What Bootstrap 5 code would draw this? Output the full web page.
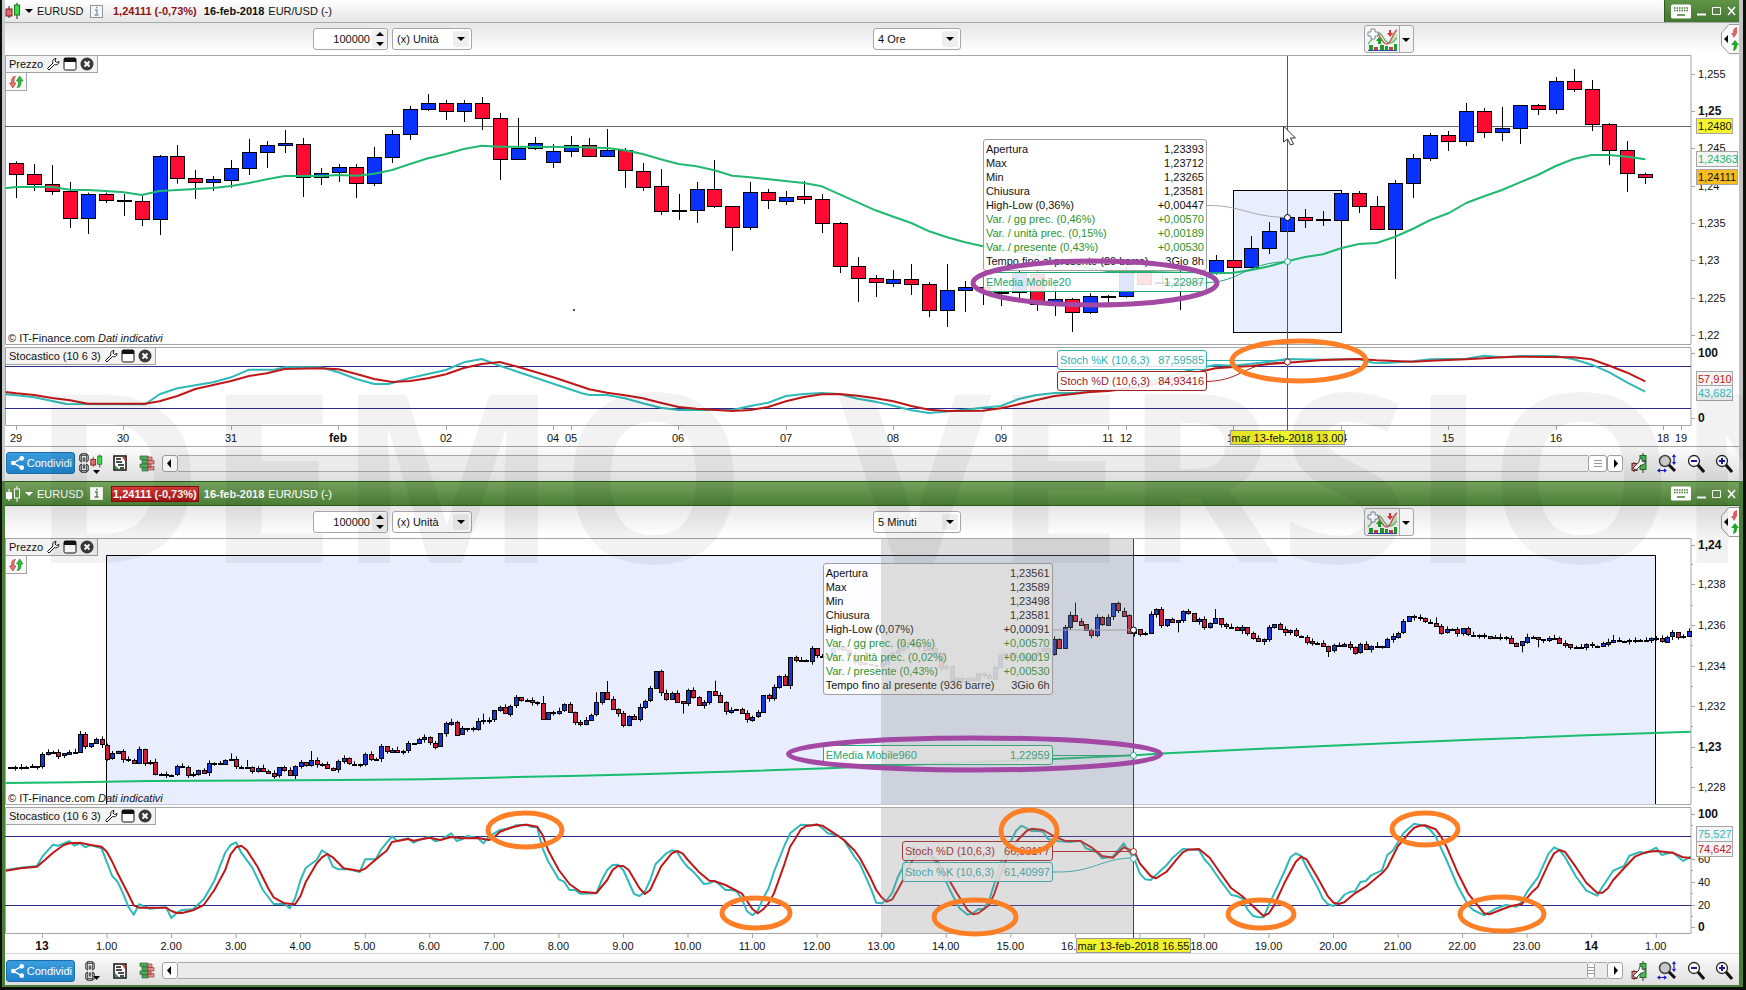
<!DOCTYPE html>
<html lang="it">
<head>
<meta charset="utf-8">
<meta name="viewport" content="width=device-width, initial-scale=1">
<title>EURUSD</title>
<link rel="stylesheet" href="https://cdn.jsdelivr.net/npm/bootstrap@5.3.0/dist/css/bootstrap.min.css">
<style>
body{background:#0b0f0a;font-family:"Liberation Sans",Arial,sans-serif;font-size:11px;line-height:14px;color:#111;padding:0 3px 3px 2px;position:relative;min-width:1200px}
.trade-win{background:#fff;border-left:3px solid #c9ccd0;border-right:4px solid #c4c4c4}
.trade-win.active{border-color:#4a7d38;border-bottom:2px solid #4f7f3c}
.win-title{height:23px;background:linear-gradient(#fff,#e6e6e6);border-bottom:1px solid #a9a9a9}
.active .win-title{height:25px;background:linear-gradient(#74a25c,#4b7e37);border-top:1px solid #2c5a1c;border-bottom:1px solid #2c5a1c;color:#fff}
.win-title .sym{width:53px}
.quote{color:#8e1418;font-weight:bold;padding:1px 2px;margin-left:8px;margin-right:5px}
.active .quote{color:#fff;background:linear-gradient(#d23a3a,#a81414);border:1px solid #7c1010;padding:0 1px}
.win-ctl{background:linear-gradient(#5f9446,#447730);border-left:1px solid #2f5c1f;padding-left:6px;width:75px;gap:6px;color:#fff}
.active .win-ctl{background:none;border-color:transparent}
.plain-btn{border:0;background:none;padding:0;color:inherit;line-height:0}
.win-tools{height:32px;background:linear-gradient(#e6e6e6,#fff 90%);display:grid;grid-template-columns:308px 32.3% 28.3% 1fr auto;align-items:center}
.ctl{height:22px;border:1px solid #a6a6a6;border-radius:3px;background-color:#fff;color:#111;font-size:11px}
.ctl input{border:0;background:none;width:58px;text-align:right;padding:0 2px 0 0;outline:0;color:inherit}
.spin{background:#f0f0f0;border-radius:2px}
select.ctl{appearance:none;padding:0 20px 0 4px;background-image:url("data:image/svg+xml,%3Csvg xmlns='http://www.w3.org/2000/svg' width='16' height='16'%3E%3Crect width='16' height='16' rx='2' fill='%23eeeeee'/%3E%3Cpath d='M4 6h8l-4 4z' fill='%23000'/%3E%3C/svg%3E");background-repeat:no-repeat;background-position:right 2px center}
.w-unit{width:80px}.w-time{width:88px}
.ind-btn{border:1px solid #a6a6a6;border-radius:3px;background:#f4f4f4;height:28px;width:50px}
.side-tab{width:18px;height:30px}
.chart-box{position:relative}
.chart-box svg.layer{position:absolute;inset:0;width:100%;height:100%;display:block}
.h-top{height:392px}.h-low{height:416px}
.tips{position:absolute;inset:0 48px 0 0}
.tag-chip{position:absolute;left:0;height:18px;border:1px solid #a3a3a3;background:#f3f3f3;padding:0 3px;display:flex;align-items:center;gap:3px;white-space:nowrap}
.chip-mini{top:17px;height:19px;background:#fafafa;padding:0 2px}
.top-stoch{top:292px}.low-stoch{top:269px}
.tip{position:absolute;border:1px solid #a0a0a0;border-radius:3px;background:rgba(255,255,255,.88);padding:2px}
.tip table{width:100%}
.tip td{padding:0;line-height:14px;white-space:nowrap}
.tip td:last-child{text-align:right}
.tip .up{color:#2c932c}
.t-ema{border-color:#22a870;color:#22a870}
.t-k{border-color:#2fb0b0;color:#2fb0b0}
.t-d{border-color:#a32020;color:#a32020}
.tip-a{left:58%;width:224px;top:84px}
.tip-b{left:58%;width:224px;top:217px}
.tip-c{left:62.4%;width:150px;top:295px}
.tip-d{left:62.4%;width:150px;top:316px}
.tip-e{left:48.5%;width:230px;top:25px}
.tip-f{left:48.5%;width:230px;top:207px}
.tip-g{left:53.2%;width:151px;top:303px}
.tip-h{left:53.2%;width:151px;top:324px}
.win-foot{height:34px;background:linear-gradient(#fdfdfd,#dedede);padding:0 6px 2px 0}
.active .win-foot{height:31px;padding:2px 6px 0 0}
.share-btn{background:linear-gradient(#3a9ddf,#1f82c8);border:1px solid #1b6ca8;border-radius:3px;color:#fff;height:22px;width:69px;padding:0 2px 0 3px;font-size:11px;margin-left:1px}
.bars-ico{margin:0 7px 0 12px}
.track{height:17px;border-top:1px solid #a9a9a9;border-bottom:1px solid #a9a9a9;background:#ebebeb}
.track-btn{height:17px;width:16px;border:1px solid #a0a0a0;border-radius:3px;background:#fff;padding:0;line-height:0}
.thumb{width:19px;color:#999}.thumb-s{width:8px;color:#999}
.foot-tools{gap:10px}
.water{position:absolute;left:0;top:370px;width:100%;height:220px;overflow:hidden;pointer-events:none;z-index:9}
.water text{font:bold 236px "Open Sans",sans-serif;fill:#000;fill-opacity:.05}
</style>
</head>
<body>
<svg class="d-none" aria-hidden="true">
<symbol id="i-candles" viewBox="0 0 16 18"><path d="M4 4v12M12 1v16" stroke="#222"/><rect x="1" y="7" width="6" height="7" fill="#e06a6a" stroke="#7c1d1d"/><rect x="9.500" y="3" width="5" height="10" fill="#3fdc4c" stroke="#137a1c"/></symbol>
<symbol id="i-candlesw" viewBox="0 0 16 18"><path d="M4 4v12M12 1v16" stroke="#fff"/><rect x="1" y="7" width="6" height="7" fill="#fff"/><rect x="9.500" y="4" width="5" height="9" fill="#5c9046" stroke="#fff"/></symbol>
<symbol id="i-wrench" viewBox="0 0 14 14"><path d="M1.500 11.500 7 6C6 3.500 7.500 1.500 10 1.500L9 4l1.500 1.500L13 4.500C13 7 11 8.500 8.500 7.500L3 13z" fill="#fff" stroke="#111" stroke-linejoin="round"/></symbol>
<symbol id="i-pane" viewBox="0 0 14 14"><rect x="1" y="1" width="12" height="12" rx="1.500" fill="#fff" stroke="#111"/><path d="M1 1h12v4H1z" fill="#111"/></symbol>
<symbol id="i-close" viewBox="0 0 14 14"><circle cx="7" cy="7" r="6.500" fill="#3a3a3a"/><path d="m4.500 4.500 5 5m0-5-5 5" stroke="#fff" stroke-width="2"/></symbol>
<symbol id="i-swap" viewBox="0 0 16 14"><path d="M7.500 1.500C3.500 1.500 3.500 5 3.500 8H1.500l3.300 5L8 8H6c0-3 0-5 1.500-6.500z" fill="#e57373" stroke="#b83a3a" stroke-width=".7"/><path d="M9 12.500c4 0 4-3.500 4-6.500h2l-3.300-5L8.500 6h2c0 3 0 5-1.500 6.500z" fill="#2fbd3b" stroke="#128a1e" stroke-width=".7"/></symbol>
<symbol id="i-keys" viewBox="0 0 20 14"><rect width="20" height="14" rx="1.500" fill="#fff"/><path d="M3 3.500h14M3 6h14" stroke="#477a33" stroke-width="1.500" stroke-dasharray="1.500 1"/><path d="M6 10.500h8" stroke="#477a33" stroke-width="1.500"/></symbol>
<symbol id="i-ind" viewBox="0 0 32 24"><path d="M2 17C7 12 9 5 13 6s5 9 10 10 5-3 8-5L31 5c-4 2-6 11-9 11S16 5 12 5z" fill="#bfe6bd"/><path d="M2 17C7 12 9 5 13 6s5 9 10 10 5-3 8-5" fill="none" stroke="#5fb86a" stroke-width="1.300"/><path d="M10 7c3-3 6 11 11 10s5-11 10-14" fill="none" stroke="#c95a5a" stroke-width="1.500"/><path d="M5 2h4v3h3v4H9v3H5V9H2V5h3z" fill="#fff" stroke="#7a8a9a"/><path d="m13 10-3 4h2v3h3v-3h2z" fill="#1f9e2c"/><path d="m24 10 3-4h-2V3h-2v3h-2z" fill="#d33"/><path d="M3 18h4v5H3zM14 18h4v5h-4zM19 19h3v4h-3zM28 17h3v6h-3z" fill="#1f9e2c"/><path d="M8 20h4v3H8zM23 20h4v3h-4z" fill="#c33a55"/><path d="M2 23.500h29" stroke="#2b50a0"/></symbol>
<symbol id="i-share" viewBox="0 0 16 16"><path d="M12.500 3 3.500 8l9 5" fill="none" stroke="#fff" stroke-width="1.500"/><circle cx="12.500" cy="3" r="2.500" fill="#fff"/><circle cx="3.500" cy="8" r="2.500" fill="#fff"/><circle cx="12.500" cy="13" r="2.500" fill="#fff"/></symbol>
<symbol id="i-chain" viewBox="0 0 10 20"><path d="M3 8H2.500L1.500 7V3L3 1.500h4L8.500 3v4l-1 1H7M5 4.500v4M5 11.500v4M3 12H2.500l-1 1v4L3 18.500h4L8.500 17v-4l-1-1H7" fill="none" stroke="#222" stroke-width="2.400"/><path d="M3 8H2.500L1.500 7V3L3 1.500h4L8.500 3v4l-1 1H7M5 4.500v4M5 11.500v4M3 12H2.500l-1 1v4L3 18.500h4L8.500 17v-4l-1-1H7" fill="none" stroke="#ddd" stroke-width=".7"/></symbol>
<symbol id="i-doc" viewBox="0 0 14 16"><rect x="1" y="1" width="12" height="14" fill="#fff" stroke="#111" stroke-width="1.500"/><path d="M3 4h5M3 7h6M5 10h6M7 13h4" stroke="#111" stroke-width="1.500"/><path d="M9 2h3v4z" fill="#d44"/><path d="M2 14v-4l4 4z" fill="#2a9a34"/></symbol>
<symbol id="i-bars" viewBox="0 0 16 16"><path d="M1 .5h8v3.500H1zM3 4.500h6V8H3zM1 8.500h8V12H1zM3 12.500h6v3H3z" fill="#51a85c" stroke="#256b2e" stroke-width=".7"/><path d="M9 1.500h4v3.500H9zM9 5h6v3.500H9zM9 8.500h3V12H9zM9 11h6v3.500H9z" fill="#e58a8a" stroke="#994040" stroke-width=".7"/></symbol>
<symbol id="i-tool" viewBox="0 0 16 20"><path d="M12 0v20M3 9v10" stroke="#333"/><rect x="9" y="2.500" width="6" height="14" fill="#4cb955" stroke="#1f6e28"/><rect x="1" y="10.500" width="5" height="7" fill="#d98787" stroke="#7a2b2b"/><path d="m2 15 6-6c0-2 1-4 3-4v3l2 1 1-2c1 3-1 5-4 5l-5 5z" fill="#fff" stroke="#222" stroke-width=".8"/></symbol>
<symbol id="i-fit" viewBox="0 0 20 19"><circle cx="8" cy="7" r="5.500" fill="#c9c9c9" stroke="#444" stroke-width="1.500"/><path d="m12 11 6 6" stroke="#111" stroke-width="3"/><path d="M17 1v9M15.500 3 17 1l1.500 2M15.500 8l1.500 2 1.500-2M1 16.500h8M3 15l-2 1.500L3 18M7 15l2 1.500L7 18" stroke="#1a1ad0" fill="none" stroke-width="1.200"/></symbol>
<symbol id="i-minus" viewBox="0 0 18 19"><circle cx="7" cy="7" r="5.500" fill="#fff" stroke="#222" stroke-width="1.300"/><path d="M4 7h6" stroke="#1a1aa0" stroke-width="2"/><path d="m11 11 6 7" stroke="#111" stroke-width="3"/></symbol>
<symbol id="i-plus" viewBox="0 0 18 19"><circle cx="7" cy="7" r="5.500" fill="#fff" stroke="#222" stroke-width="1.300"/><path d="M4 7h6M7 4v6" stroke="#1a1aa0" stroke-width="2"/><path d="m11 11 6 7" stroke="#111" stroke-width="3"/></symbol>
</svg>

<section class="trade-win">
  <header class="win-title d-flex align-items-stretch">
    <div class="d-flex align-items-center flex-grow-1">
      <svg width="16" height="18"><use href="#i-candles"/></svg>
      <svg class="ms-1 me-1" width="8" height="6"><path d="M0 1h8L4 5z"/></svg>
      <span class="sym">EURUSD</span>
      <svg width="13" height="13"><rect x=".5" y=".5" width="12" height="12" fill="#f4f6f8" stroke="#8a949c"/><path d="M5 5h2v5M4.500 10h4M6 2.500h1.500" stroke="#8a949c" stroke-width="1.300" fill="none"/></svg>
      <span class="quote">1,24111 (-0,73%)</span><b class="me-1">16-feb-2018</b><span>EUR/USD (-)</span>
    </div>
    <div class="win-ctl d-flex align-items-center">
      <button class="plain-btn" aria-label="Tastiera"><svg width="20" height="15"><use href="#i-keys"/></svg></button>
      <button class="plain-btn" aria-label="Riduci"><svg width="9" height="10"><path d="M0 8.500h9" stroke="#fff" stroke-width="2"/></svg></button>
      <button class="plain-btn" aria-label="Ingrandisci"><svg width="9" height="10"><path d="M.5 1.500h8v7h-8z" fill="none" stroke="#fff"/></svg></button>
      <button class="plain-btn" aria-label="Chiudi"><svg width="9" height="10"><path d="m1 1 7 8m0-8L1 9" stroke="#fff" stroke-width="1.500"/></svg></button>
    </div>
  </header>
  <div class="win-tools">
    <span></span>
    <div class="d-flex">
      <div class="ctl d-flex align-items-center"><input type="text" aria-label="Quantità" value="100000"><svg class="spin" width="15" height="18"><path d="M4 6h8L8 2zM4 12h8l-4 4z"/></svg></div>
      <select class="ctl w-unit ms-1" aria-label="Unità"><option>(x) Unità</option></select>
    </div>
    <div><select class="ctl w-time" aria-label="Intervallo"><option>4 Ore</option></select></div>
    <div><button class="ind-btn d-flex align-items-center p-0" aria-label="Indicatori"><svg width="34" height="24"><use href="#i-ind"/></svg><svg width="14" height="26"><path d="M.5 0v26" stroke="#a6a6a6"/><path d="M3 12h8l-4 4z"/></svg></button></div>
    <button class="plain-btn side-tab" aria-label="Pannello ordini"><svg width="18" height="30"><path d="M18 .5H8L.5 9v12L8 29.500h10" fill="#fafafa" stroke="#999"/><path d="M7 11v8l-4-4z"/><path d="M16 3c-4 1-4 4-4 6h-2l3 5 3-5" fill="#e06060"/><path d="M12 27c4-1 4-4 4-6h2l-4-5-4 5h3" fill="#1faa2c"/></svg></button>
  </div>
  <div class="chart-box h-top" id="top">
    <svg class="layer base"></svg>
    <div class="tips">
      <div class="tip tip-a"><table><tbody>
        <tr><td>Apertura</td><td>1,23393</td></tr><tr><td>Max</td><td>1,23712</td></tr><tr><td>Min</td><td>1,23265</td></tr><tr><td>Chiusura</td><td>1,23581</td></tr><tr><td>High-Low (0,36%)</td><td>+0,00447</td></tr>
        <tr class="up"><td>Var. / gg prec. (0,46%)</td><td>+0,00570</td></tr><tr class="up"><td>Var. / unità prec. (0,15%)</td><td>+0,00189</td></tr><tr class="up"><td>Var. / presente (0,43%)</td><td>+0,00530</td></tr><tr><td>Tempo fino al presente (20 barre)</td><td>3Gio 8h</td></tr></tbody></table></div>
      <div class="tip tip-b t-ema d-flex justify-content-between"><span>EMedia Mobile20</span><span>1,22987</span></div>
      <div class="tip tip-c t-k d-flex justify-content-between"><span>Stoch %K (10,6,3)</span><span>87,59585</span></div>
      <div class="tip tip-d t-d d-flex justify-content-between"><span>Stoch %D (10,6,3)</span><span>84,93416</span></div>
    </div>
    <svg class="layer over"></svg>
    <div class="tag-chip">Prezzo <svg width="14" height="14"><use href="#i-wrench"/></svg><svg width="14" height="14"><use href="#i-pane"/></svg><svg width="14" height="14"><use href="#i-close"/></svg></div>
    <div class="tag-chip chip-mini"><svg width="16" height="14"><use href="#i-swap"/></svg></div>
    <div class="tag-chip top-stoch">Stocastico (10 6 3) <svg width="14" height="14"><use href="#i-wrench"/></svg><svg width="14" height="14"><use href="#i-pane"/></svg><svg width="14" height="14"><use href="#i-close"/></svg></div>
  </div>
  <footer class="win-foot d-flex align-items-center">
    <button class="share-btn d-flex align-items-center justify-content-between"><svg width="15" height="16"><use href="#i-share"/></svg>Condividi</button>
    <svg class="ms-1" width="34" height="22"><use href="#i-chain" x="0" y="1" width="10" height="20"/><use href="#i-candles" x="11" y="0" width="13" height="18"/><path d="M14 18h7l-3.500 4z"/></svg>
    <svg width="14" height="16"><use href="#i-doc"/></svg>
    <svg class="bars-ico" width="16" height="17"><use href="#i-bars"/></svg>
    <button class="track-btn" aria-label="Indietro"><svg width="8" height="9"><path d="M5 0v9L1 4.500z"/></svg></button>
    <div class="track flex-grow-1"></div>
    <button class="track-btn thumb" aria-label="Scorri"><svg width="8" height="9"><path d="M0 1.500h8M0 4.500h8M0 7.500h8" stroke="currentColor"/></svg></button>
    <button class="track-btn me-2" aria-label="Avanti"><svg width="8" height="9"><path d="M3 0v9l4-4.500z"/></svg></button>
    <div class="foot-tools d-flex align-items-center"><svg width="16" height="20"><use href="#i-tool"/></svg><svg width="20" height="19"><use href="#i-fit"/></svg><svg width="18" height="19"><use href="#i-minus"/></svg><svg width="18" height="19"><use href="#i-plus"/></svg></div>
  </footer>
</section>

<section class="trade-win active">
  <header class="win-title d-flex align-items-stretch">
    <div class="d-flex align-items-center flex-grow-1">
      <svg width="16" height="18"><use href="#i-candlesw"/></svg>
      <svg class="ms-1 me-1" width="8" height="6"><path d="M0 1h8L4 5z" fill="#fff"/></svg>
      <span class="sym">EURUSD</span>
      <svg width="13" height="13"><rect x=".5" y=".5" width="12" height="12" fill="#f4f6f8" stroke="#dfe8da"/><path d="M5 5h2v5M4.500 10h4M6 2.500h1.500" stroke="#56783f" stroke-width="1.300" fill="none"/></svg>
      <span class="quote">1,24111 (-0,73%)</span><b class="me-1">16-feb-2018</b><span>EUR/USD (-)</span>
    </div>
    <div class="win-ctl d-flex align-items-center">
      <button class="plain-btn" aria-label="Tastiera"><svg width="20" height="15"><use href="#i-keys"/></svg></button>
      <button class="plain-btn" aria-label="Riduci"><svg width="9" height="10"><path d="M0 8.500h9" stroke="#fff" stroke-width="2"/></svg></button>
      <button class="plain-btn" aria-label="Ingrandisci"><svg width="9" height="10"><path d="M.5 1.500h8v7h-8z" fill="none" stroke="#fff"/></svg></button>
      <button class="plain-btn" aria-label="Chiudi"><svg width="9" height="10"><path d="m1 1 7 8m0-8L1 9" stroke="#fff" stroke-width="1.500"/></svg></button>
    </div>
  </header>
  <div class="win-tools">
    <span></span>
    <div class="d-flex">
      <div class="ctl d-flex align-items-center"><input type="text" aria-label="Quantità" value="100000"><svg class="spin" width="15" height="18"><path d="M4 6h8L8 2zM4 12h8l-4 4z"/></svg></div>
      <select class="ctl w-unit ms-1" aria-label="Unità"><option>(x) Unità</option></select>
    </div>
    <div><select class="ctl w-time" aria-label="Intervallo"><option>5 Minuti</option></select></div>
    <div><button class="ind-btn d-flex align-items-center p-0" aria-label="Indicatori"><svg width="34" height="24"><use href="#i-ind"/></svg><svg width="14" height="26"><path d="M.5 0v26" stroke="#a6a6a6"/><path d="M3 12h8l-4 4z"/></svg></button></div>
    <button class="plain-btn side-tab" aria-label="Pannello ordini"><svg width="18" height="30"><path d="M18 .5H8L.5 9v12L8 29.500h10" fill="#fafafa" stroke="#999"/><path d="M7 11v8l-4-4z"/><path d="M16 3c-4 1-4 4-4 6h-2l3 5 3-5" fill="#e06060"/><path d="M12 27c4-1 4-4 4-6h2l-4-5-4 5h3" fill="#1faa2c"/></svg></button>
  </div>
  <div class="chart-box h-low" id="low">
    <svg class="layer base"></svg>
    <div class="tips">
      <div class="tip tip-e"><table><tbody>
        <tr><td>Apertura</td><td>1,23561</td></tr><tr><td>Max</td><td>1,23589</td></tr><tr><td>Min</td><td>1,23498</td></tr><tr><td>Chiusura</td><td>1,23581</td></tr><tr><td>High-Low (0,07%)</td><td>+0,00091</td></tr>
        <tr class="up"><td>Var. / gg prec. (0,46%)</td><td>+0,00570</td></tr><tr class="up"><td>Var. / unità prec. (0,02%)</td><td>+0,00019</td></tr><tr class="up"><td>Var. / presente (0,43%)</td><td>+0,00530</td></tr><tr><td>Tempo fino al presente (936 barre)</td><td>3Gio 6h</td></tr></tbody></table></div>
      <div class="tip tip-f t-ema d-flex justify-content-between"><span>EMedia Mobile960</span><span>1,22959</span></div>
      <div class="tip tip-g t-d d-flex justify-content-between"><span>Stoch %D (10,6,3)</span><span>66,83177</span></div>
      <div class="tip tip-h t-k d-flex justify-content-between"><span>Stoch %K (10,6,3)</span><span>61,40997</span></div>
    </div>
    <svg class="layer over"></svg>
    <div class="tag-chip">Prezzo <svg width="14" height="14"><use href="#i-wrench"/></svg><svg width="14" height="14"><use href="#i-pane"/></svg><svg width="14" height="14"><use href="#i-close"/></svg></div>
    <div class="tag-chip chip-mini"><svg width="16" height="14"><use href="#i-swap"/></svg></div>
    <div class="tag-chip low-stoch">Stocastico (10 6 3) <svg width="14" height="14"><use href="#i-wrench"/></svg><svg width="14" height="14"><use href="#i-pane"/></svg><svg width="14" height="14"><use href="#i-close"/></svg></div>
  </div>
  <footer class="win-foot d-flex align-items-center">
    <button class="share-btn d-flex align-items-center justify-content-between"><svg width="15" height="16"><use href="#i-share"/></svg>Condividi</button>
    <svg class="ms-1" width="34" height="22"><use href="#i-chain" x="6" y="1" width="10" height="20"/><path d="M14 16h7l-3.500 4z"/></svg>
    <svg width="14" height="16"><use href="#i-doc"/></svg>
    <svg class="bars-ico" width="16" height="17"><use href="#i-bars"/></svg>
    <button class="track-btn" aria-label="Indietro"><svg width="8" height="9"><path d="M5 0v9L1 4.500z"/></svg></button>
    <div class="track flex-grow-1"></div>
    <button class="track-btn thumb-s" aria-label="Scorri"><svg width="6" height="9"><path d="M0 1.500h6M0 4.500h6M0 7.500h6" stroke="currentColor"/></svg></button>
    <div class="track pe-2 ps-1"></div>
    <button class="track-btn me-2" aria-label="Avanti"><svg width="8" height="9"><path d="M3 0v9l4-4.500z"/></svg></button>
    <div class="foot-tools d-flex align-items-center"><svg width="16" height="20"><use href="#i-tool"/></svg><svg width="20" height="19"><use href="#i-fit"/></svg><svg width="18" height="19"><use href="#i-minus"/></svg><svg width="18" height="19"><use href="#i-plus"/></svg></div>
  </footer>
</section>
<div class="water"><svg width="100%" height="220"><text x="30" y="193">DEMO</text><text x="838" y="193">VERSION</text></svg></div>

<script src="https://cdn.jsdelivr.net/npm/bootstrap@5.3.0/dist/js/bootstrap.bundle.min.js"></script>
<script>
// Candles: colour (r, b, k = flat), high, body top, body bottom, low, in thirds of a pixel.
const h4 = `r484 490 523 594,r492 523 553 573,r495 553 574 585,r546 574 656 684,b578 583 656 702,r578 583 602 609,k582 601 604 648,r588 604 659 678,b465 469 659 705,r435 469 535 551,r510 535 548 597,b528 538 548 573,b480 505 541 563,b417 457 505 525,b423 436 457 504,b390 430 436 459,r414 433 532 591,b504 520 532 555,b492 502 517 546,r492 502 550 594,b441 472 550 558,b390 403 472 489,b318 328 403 420,b282 310 328 333,r300 310 334 360,b300 310 334 366,r291 310 355 390,r339 355 478 540,b354 445 478 478,b411 430 445 450,b432 454 487 504,b408 436 454 471,r414 436 469 469,b387 451 469 469,r444 451 511 564,r489 514 562 573,r507 559 634 645,k582 631 634 660,b546 568 631 669,r480 568 619 624,r619 619 682 753,b546 577 682 690,r567 577 601 627,b573 592 604 615,r543 589 598 612,r582 598 670 699,r666 670 799 819,r771 799 835 906,r825 835 847 891,b810 838 850 861,r792 838 853 885,r846 853 931 951,b792 871 931 981,b843 862 871 936,r862 862 871 915,k866 875 878 918,b813 820 878 895,r815 822 912 933,b840 898 910 948,r894 898 937 996,b880 889 937 942,k885 888 890 912,b800 820 889 893,r810 815 850 850,k825 845 848 860,k810 850 852 930,k835 845 848 865,b765 781 820 824,r781 781 802 802,b708 745 802 802,b666 694 745 762,b620 652 694 726,r627 652 661 684,k633 658 661 678,b580 580 661 661,r573 580 619 639,r588 619 688 688,b540 550 688 837,b462 475 550 594,b399 406 475 483,r393 406 424 453,b309 334 424 438,r324 334 397 414,b321 385 397 423,b316 316 385 432,r312 316 328 345,b231 244 328 342,r207 244 268 276,r240 268 373 393,r369 373 451 495,r423 451 520 576,r518 523 532 552`.split(',').map(s => [s[0], ...s.slice(1).split(' ').map(Number)]);
// Line series: "bar:level" pairs.
const ema20 = '-.6:565 0:561 2:561 3:569 4:570 5:573 6:577 7:585 8:573 9:570 10:567 11:564 12:558 13:549 14:538 15:528 17:528 18:525 19:527 20:521 21:510 22:492 23:475 24:462 25:447 26:437 27:440 31:441 33:444 34:451 35:462 36:478 37:492 38:499 39:511 40:527 41:532 44:549 45:559 46:583 48:631 49:650 50:669 51:694 52:712 53:727 54:739 57:765 60:806 61:813 65:818 67:820 68:818 69:810 70:799 71:784 72:771 73:763 74:745 75:732 76:729 77:711 78:687 79:660 80:640 81:609 82:589 83:570 84:547 85:525 86:498 87:477 88:465 89:465 90:470 91:478';
const k4 = '-.6:178 0:181 1:187 2:198 2.8:207 7.2:208 8:178 9:160 10:151 11:142 12:127 13:104 14.4:104 15:97 17:97 18:112 19:132 20:147 20.8:147 22:129 24:105 25:82 26:72 27:92 28:110 31.6:175 32:180 33:180 34:190 35:205 36:218 37:225 40:225 41:213 42:203 43:183 44:177 45:174 46:177 47:191 48:200 49:212 50:226 51:234 52.3:228 54:218 55:213 56:192 57:180 58:174 59:174 60:170 62:158 66:100 67:90 68:92 69:86 70:80 71:72 73:74 75:72 75.8:83 76.5:84 78:79 79:73 81:71 82:62 83:67 84:63 86:63 87:73 88:89 89:112 90:143 91:170';
const d4 = '-.6:171 0:175 1:180 2:189 3:196 4:206 7.2:206 8:199 9:183 10:162 11:150 12:138 13:123 14:115 15:102 17:100 18:103 19:117 20:132 21:141 22:138 23:130 24:118 25:99 26:87 27:81 28:95 29:111 30:127 31.6:155 32:163 33:173 34:181 35:190 36:203 37:216 38:221 40:228 41:225 42:216 43:199 44:186 45:178 46:177 47:182 48:190 49:199 50:213 51:224 52:228 54:227 55:220 56:208 57:195 58:183 59:177 60:171 61:168 63:155 66:112 67:100 68:96 69:93 70:87 71:83 73:75 75:72 76:76 78:80 79:77 81:73 83:67 84:65 87:67 88:73 89:92 90:113 91:139';
// Five-minute closes; each bar opens at the previous close.
const m5 = '682 682 681 681 679 679 642 637 635 647 640 635 638 583 620 610 598 614 655 640 633 658 659 668 627 668 665 702 702 704 704 679 680 704 703 690 698 670 670 670 659 658 680 680 680 691 683 692 698 706 682 691 707 679 667 676 661 673 672 683 688 664 655 671 672 672 643 659 656 619 634 629 634 632 610 611 598 592 608 620 580 550 545 583 565 565 568 543 541 539 511 502 520 497 472 481 481 487 490 538 517 517 512 493 516 545 552 540 524 487 457 478 508 520 555 527 535 500 482 445 394 458 475 458 484 491 451 472 496 487 454 466 487 514 509 508 520 538 530 517 466 475 442 409 437 352 360 361 364 325 347 350 350 325 320 330 345 365 370 372 375 378 370 350 340 330 305 310 320 315 330 325 340 385 378 420 415 425 415 420 400 405 415 380 345 340 350 345 350 360 345 335 325 340 296 322 260 224 242 253 271 285 232 254 230 190 212 226 280 268 283 280 223 208 257 238 247 241 214 220 244 238 262 250 235 253 260 262 272 262 280 295 305 298 262 253 268 278 271 287 290 304 310 308 317 331 316 317 311 320 337 313 328 319 318 322 298 289 278 244 229 232 235 245 248 257 277 268 268 280 265 284 286 286 289 294 290 291 294 308 317 304 290 292 298 299 294 293 308 313 322 322 321 313 317 318 310 305 299 303 304 301 302 300 299 293 295 304 290 277 292 288 274'.split(' ').map(Number);
const longWick = {13:[10,0],44:[20,0],41:[18,0],56:[28,4],79:[5,8],88:[20,10],99:[22,0],109:[30,5],111:[34,0],125:[0,30],131:[32,0],159:[90,0],198:[36,0],217:[0,30],224:[28,0],245:[0,20],254:[12,0],284:[0,24],298:[14,0],281:[0,20],265:[16,0],165:[30,0]};
const ema960 = '-.8:729 12:727 26:723 61:720 77:718 88:714 94:711 106:707 117:703 136:694 152:685 169:673 194:657 209:646 215:640 237:623 257:609 274:598 293:586 312.400:575';
const k5 = '-.8:240 2:233 5:228 6:200 8:164 9:167 11:154 12:167 13:160 14:172 15:165 17:175 19:258 20:275 21:310 22:350 23:374 24:343 26:356 29:352 30:384 31:368 32:360 34:358 36:328 38:272 40:188 41:165 42:157 43:188 45:232 47:300 49:342 51:342 52:355 53:325 54:270 55:233 57:210 58:181 59:192 60:230 61:238 63:238 65:246 66:208 68:208 69:178 71:139 72:153 74:145 75:158 76:150 78:140 79:154 80:150 82:130 83:153 84:148 85:138 87:145 88:160 89:140 90:130 91:120 93:115 94:106 96:104 97:111 98:112 99:175 100:213 102:268 103:275 104:300 105:300 106:311 109:310 110:270 111:240 112:225 113:224 114:240 116:312 117:318 118:305 119:270 120:222 122:190 123:181 124:186 125:212 126:232 127:245 129:282 130:280 131:272 132:286 133:300 134:300 135:303 136:325 137:364 138:376 139:362 140:325 141:295 142:245 144:165 145:130 147:104 149:106 150:103 151:115 152:130 154:137 155:150 157:202 158:222 160:295 161:338 162:340 163:330 164:308 165:262 166:232 167:200 168:185 169:180 171:195 172:215 174:275 175:310 176.500:355 178:374 179:370 180:357 181:358 182:330 183:280 184:225 185:190 186:155 187:122 188:107 189:115 190:124 191:122 192:125 193:148 195:154 197:156 199:152 200:175 202:187 203:205 205:200 207:160 208:185 209:207 210:250 211:268 212:270 213:255 215:225 216:205 218:177 221:180 222:208 223:225 225:272 227:315 228:318 229:325 230:358 231:377 232:382 233:382 234:345 235:310 237:240 238:202 239:190 240:198 241:232 243:290 244:325 245:343 246:348 247:334 248:315 249:306 250:304 251:276 252:273 253:256 255:241 256:195 257:182 259:130 260:115 261:101 263:108 264:120 265:140 267:210 269:285 271:345 272:360 274:376 276:357 278:345 280:350 281:335 282:305 284:262 286:190 287:172 288:180 289:200 291:258 293:302 295:317 296:290 298:242 300:228 301:197 303:186 304:190 306:173 307:195 309:187 311:213 312.400:200';
const d5 = '-.8:242 2:235 5:230 6:217 8:188 10:165 11:160 13:158 15:165 17:170 18:185 19:215 20:250 22:313 23:346 24:353 29:353 30:363 31:369 32:369 34:361 36:345 38:300 40:240 41:193 42:172 43:167 44:180 46:230 48:295 49:322 51:340 53:343 54:318 55:275 57:220 58:202 59:192 60:202 62:235 65:243 66:236 67:222 69:195 70:182 71:156 74:147 75:152 78:143 80:150 82:141 84:145 87:144 89:150 90:142 91:126 93:113 95:106 96:104 98:110 99:135 100:180 102:240 104:282 106:305 109:309 111:270 112:240 113:228 114:228 115:240 117:295 118:312 119:300 120:265 121:230 123:190 124:183 125:190 126:210 128:245 130:272 131:274 133:285 136:310 138:357 139:370 140:358 141:340 142:310 144:220 145:170 146:145 147:118 148:108 150:104 151:107 153:128 155:150 157:182 158:205 160:265 161:300 162:322 163:335 164:328 165:300 166:270 167:232 168:205 170:185 172:205 174:255 176:310 178:360 179:373 180:370 182:345 183:310 184:262 185:215 186:180 187:155 189:122 190:116 192:120 194:138 196:152 199:153 201:172 203:198 205:203 207:172 209:185 210:220 212:258 213:265 214:255 215:245 217:205 218:187 219:179 221:177 223:203 225:250 227:295 229:318 231:348 233:378 234:370 235:345 237:275 239:215 240:200 241:208 243:262 245:320 246:338 247:342 248:337 250:310 252:290 255:250 256:232 258:168 260:130 261:113 262:107 263:106 265:118 266:140 267:170 269:245 271:310 273:350 274:370 275:373 277:360 279:348 281:342 283:305 284:290 286:220 287:190 288:180 289:185 291:230 293:278 295:308 296:308 297:295 298:270 300:235 302:200 304:187 306:183 309:188 311:202 312.400:204';

const SPAN = 1686, GREY = '#a6a6a6';
const line = (x1, y1, x2, y2, c, w = 1) => `<path d="M${x1} ${y1}L${x2} ${y2}" stroke="${c}" stroke-width="${w}" fill="none"/>`;
const rect = (x, y, w, h, f, s = 'none') => `<rect x="${x}" y="${y}" width="${w}" height="${h}" fill="${f}" stroke="${s}"/>`;
const text = (x, y, t, o = '') => `<text x="${x}" y="${y + 4}" ${o}>${t}</text>`;
const BOLD = ' font-weight="bold" font-size="12"', MID = 'text-anchor="middle"';
const series = (s, X, y0, c, w = 2) => `<polyline fill="none" stroke="${c}" stroke-width="${w}" stroke-linejoin="round" points="${s.split(' ').map(p => { const [i, v] = p.split(':').map(Number); return X(i).toFixed(1) + ',' + (y0 + v / 3).toFixed(1); }).join(' ')}"/>`;
const ring = (x, y, rx, ry, c) => `<ellipse cx="${x}" cy="${y}" rx="${rx}" ry="${ry}" fill="none" stroke="${c}" stroke-width="5"/>`;
const dot = (x, y, c) => `<circle cx="${x}" cy="${y}" r="3" fill="#fff" stroke="${c}"/>`;
const PURPLE = '#a349a4', ORANGE = '#ff7f27';

function paint(id, top, base, over) {
  const box = document.getElementById(id), k = (box.clientWidth - 48) / SPAN;
  const P = x => Math.round((5 + (x - 5) * k) * 10) / 10, R = P(1691);
  for (const [cls, fn] of [['base', base], ['over', over]])
    box.querySelector('.' + cls).innerHTML = `<g transform="translate(-5,${-top})" font-size="11" fill="#111">${fn(P, R)}</g>`;
}
function frame(R, y1, y2, y3, y4) {
  return `<path d="M5.500 ${y1}.5H${R}V${y2}.5H5.500zM5.500 ${y3}.5H${R}V${y4}.5H5.500z" fill="#fff" stroke="${GREY}"/>`;
}
const priceLabels = (R, list) => list.map(([y, t, b]) => line(R, y + .5, R + 4, y + .5, GREY) + text(R + 7, y, t, b ? BOLD : '')).join('');
const tag = (R, y, w, t, f, c) => rect(R + 5.500, y - 7.500, w, 15, f, GREY) + text(R + 7, y, t, `fill="${c}"`);

function draw() {
  paint('top', 55, (P, R) => {
    const X = i => P(16.3 + 17.900 * i);
    let s = frame(R, 55, 344, 347, 425) + line(5, 446.500, R + 50, 446.500, GREY);
    s += rect(P(1233.500), 190.500, P(1341.500) - P(1233.500), 142, '#e8eefe', '#000');
    s += line(5, 126.500, R, 126.500, '#666');
    h4.forEach(([c, h, t, b, l], i) => {
      const x = Math.round(X(i)) + .5;
      s += line(x, h / 3, x, l / 3, '#000') + rect(x - 7, Math.round(t / 3) + .5, 14, Math.max(1, Math.round((b - t) / 3)), { r: '#ff0a32', b: '#0a32ff', k: '#000' }[c], '#000');
    });
    s += series(ema20, X, 0, '#20b96f');
    s += line(5, 366.500, R, 366.500, '#2a2a8c') + line(5, 408.500, R, 408.500, '#2a2a8c');
    s += series(k4, X, 335, '#2fb9b9') + series(d4, X, 335, '#c01818');
    s += text(8, 338, '© IT-Finance.com') + text(98, 338, 'Dati indicativi', 'font-style="italic"') + `<circle cx="${P(574)}" cy="310" r="1"/>`;
    s += priceLabels(R, [[74, '1,255'], [111, '1,25', 1], [148, '1,245'], [186, '1,24'], [223, '1,235'], [260, '1,23'], [298, '1,225'], [335, '1,22'], [353, '100', 1], [418, '0', 1]]);
    s += tag(R, 126, 36, '1,2480', '#f6f62a', '#111') + tag(R, 159, 41, '1,24363', '#f4f4f4', '#20b96f') + tag(R, 177, 41, '1,24111', '#f5bd1e', '#111') + tag(R, 379, 36, '57,910', '#f4f4f4', '#c01818') + tag(R, 393, 36, '43,682', '#f4f4f4', '#2fb9b9');
    for (const [x, t, b] of [[16, '29'], [123, '30'], [231, '31'], [338, 'feb', 1], [446, '02'], [553, '04'], [571, '05'], [678, '06'], [786, '07'], [893, '08'], [1001, '09'], [1108, '11'], [1126, '12'], [1233, '13'], [1341, '14'], [1448, '15'], [1556, '16'], [1663, '18'], [1681, '19']])
      s += line(P(x) + .5, 426, P(x) + .5, 430, GREY) + text(P(x), 438, t, MID + (b ? BOLD : ''));
    return s;
  }, (P, R) => {
    const x = P(1287.500);
    let s = `<path d="M${P(1207)} 205.500C${P(1240)} 205 ${P(1250)} 217 ${x} 217.500" fill="none" stroke="#aaa"/>`;
    s += `<path d="M${P(1207)} 282.500C${P(1240)} 282 ${P(1245)} 263 ${x} 261.500" fill="none" stroke="#20a87a"/>`;
    s += line(P(1207), 360.500, x, 360.500, '#2fb0b0') + `<path d="M${P(1207)} 381.500C${P(1245)} 380 ${P(1240)} 363 ${x} 362" fill="none" stroke="#a32020"/>`;
    s += line(x, 56, x, 431, '#555');
    s += dot(x, 217.500, '#000') + dot(x, 261.500, '#20a87a') + dot(x, 362, '#a32020');
    s += rect(x - 57, 430.500, 114, 14, '#f2f22a', '#999') + text(x, 438, 'mar 13-feb-2018 13.00', MID);
    s += ring(P(1095), 283, 122, 22, PURPLE) + ring(P(1299), 361, 67, 20, ORANGE);
    s += `<path transform="translate(${x - 4},126)" d="M0 0v16l4-3 3 6 3-1-3-6h5z" fill="#fff" stroke="#333"/>`;
    return s;
  });

  paint('low', 538, (P, R) => {
    const X = i => P(10 + 5.380 * i);
    let s = frame(R, 538, 804, 807, 933) + line(5, 954, R + 50, 954, GREY);
    s += rect(P(106.500), 555.500, P(1655.500) - P(106.500), 249, '#e8eefe') + `<path d="M${P(106.500)} 804V555.500H${P(1655.500)}V804" fill="none" stroke="#000"/>`;
    s += series(ema960, X, 540, '#18bd6e');
    m5.forEach((c, i) => {
      const o = i ? m5[i - 1] : c, x = Math.round(X(i)) + .5, w = longWick[i] || [(i * 7 % 5) * 2 + 1, (i * 11 % 4) * 3 + 1];
      const t = 540 + Math.min(o, c) / 3, h = Math.abs(o - c) / 3;
      s += line(x, t - w[0] / 3, x, t + h + w[1] / 3, '#000') + rect(x - 2, Math.round(t) + .5, 4, Math.max(1, Math.round(h)), h < 1.200 ? '#000' : c < o ? '#1438d0' : '#d01c3c', '#000');
    });
    s += line(5, 836.500, R, 836.500, '#2a2a8c') + line(5, 905.500, R, 905.500, '#2a2a8c');
    s += series(k5, X, 790, '#2fb9b9') + series(d5, X, 790, '#c01818');
    s += text(8, 798, '© IT-Finance.com') + text(98, 798, 'Dati indicativi', 'font-style="italic"');
    s += priceLabels(R, [[545, '1,24', 1], [584, '1,238'], [625, '1,236'], [666, '1,234'], [706, '1,232'], [747, '1,23', 1], [787, '1,228'], [814, '100', 1], [859, '60'], [882, '40'], [905, '20'], [927, '0', 1]]);
    for (const y of [564, 605, 645, 686, 726, 767, 825, 870, 893, 916]) s += line(R, y + .5, R + 2, y + .5, GREY);
    s += tag(R, 834, 36, '75,527', '#f4f4f4', '#2fb9b9') + tag(R, 849, 36, '74,642', '#f4f4f4', '#c01818');
    for (let n = 0; n <= 25; n++) {
      const x = P(42 + 64.550 * n), day = n % 24 === 0;
      s += line(x + .5, 934, x + .5, 938, GREY);
      if (n !== 17) s += text(x, 946, n === 0 ? '13' : n === 24 ? '14' : (n % 24) + '.00', MID + (day ? BOLD : ''));
    }
    return s;
  }, (P, R) => {
    const x = P(1133.500);
    let s = line(P(1053), 630, x, 630, '#aaa') + line(P(1053), 755.500, x, 755.500, '#20a87a') + line(P(1053), 851.500, x, 851.500, '#c01818') + `<path d="M${P(1053)} 872C${P(1095)} 873 ${P(1100)} 858 ${x} 858" fill="none" stroke="#2fb0b0"/>`;
    s += `<path d="M${P(881)} 539H${x}V804H${P(881)}zM${P(881)} 808H${x}V933H${P(881)}z" fill="#dadada" fill-opacity=".2"/><path d="M${P(881)} 539H${x}V804H${P(881)}zM${P(881)} 808H${x}V933H${P(881)}z" fill="#000" fill-opacity=".1"/>`;
    s += line(x, 539, x, 939, '#444') + dot(x, 630, '#000') + dot(x, 755.500, '#20a87a') + dot(x, 858.500, '#2fb0b0') + dot(x, 851.500, '#a32020');
    s += rect(x - 57, 938.500, 114, 14, '#f2f22a', '#999') + text(x, 946, 'mar 13-feb-2018 16.55', MID);
    s += ring(P(974.500), 754, 186, 16, PURPLE);
    for (const [a, y, rx, ry] of [[525, 830, 37, 17], [756, 913, 34, 15], [975, 917, 41, 17], [1029, 831, 28, 21], [1261, 914, 33, 14], [1425, 829, 33, 16], [1502, 914, 42, 17]])
      s += ring(P(a), y, rx, ry, ORANGE);
    return s;
  });
}
draw();
addEventListener('resize', draw);
</script>
</body>
</html>
